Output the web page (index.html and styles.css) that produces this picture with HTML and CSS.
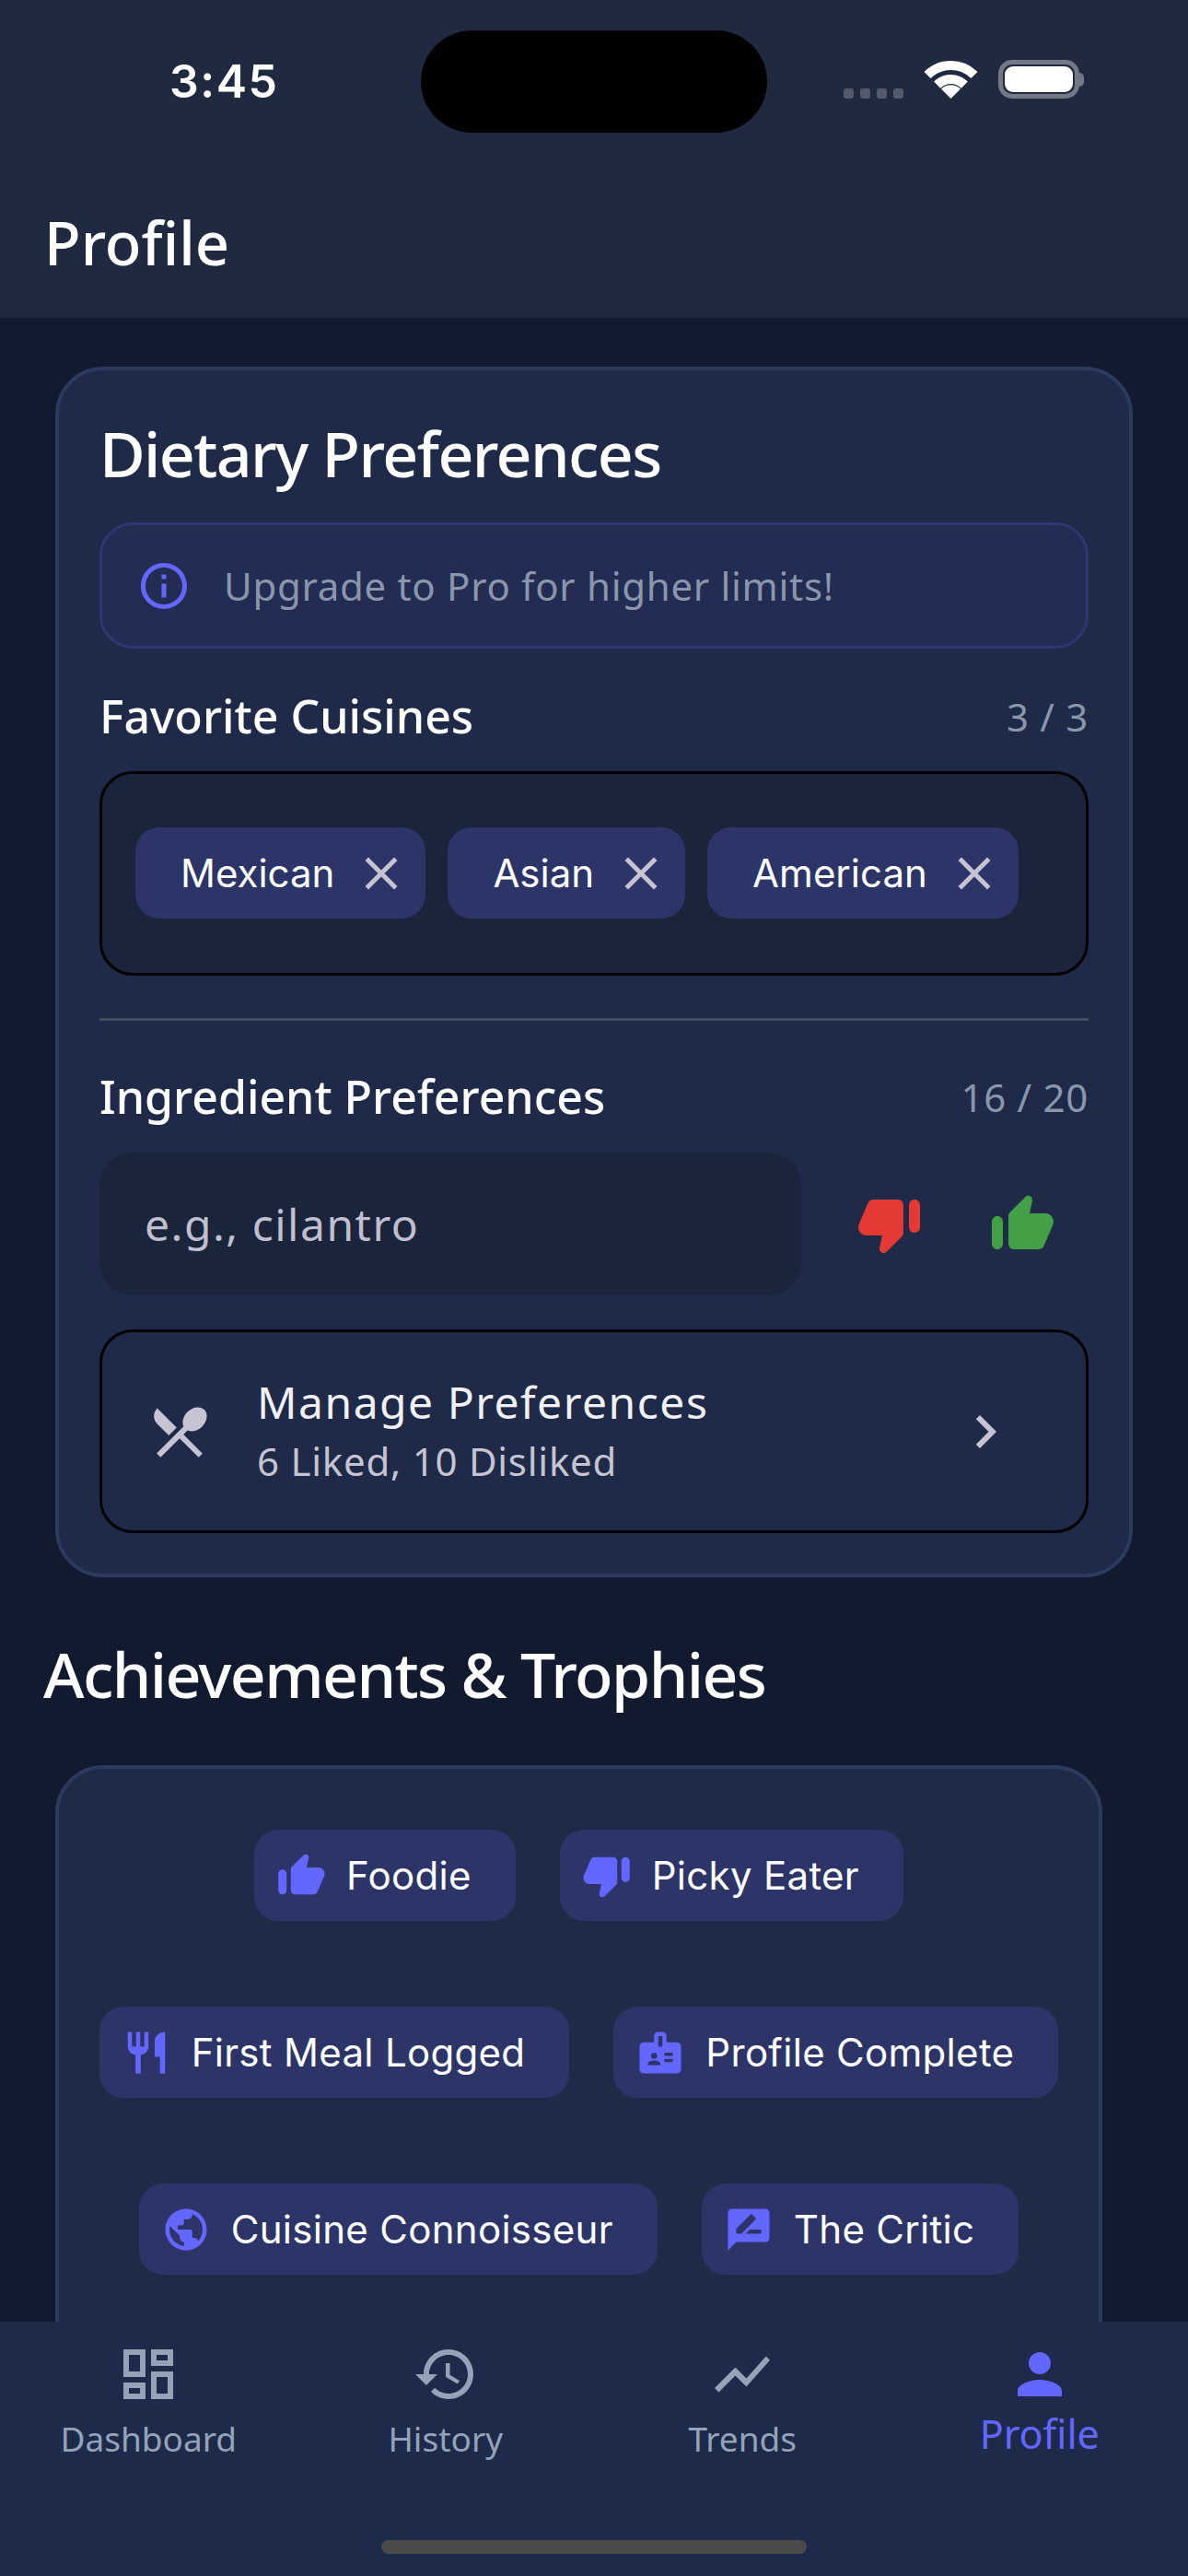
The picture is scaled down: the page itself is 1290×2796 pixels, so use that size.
FILE: index.html
```html
<!DOCTYPE html>
<html lang="en">
<head>
<meta charset="utf-8">
<title>Profile</title>
<link rel="stylesheet" href="styles.css">
</head>
<body>
<div class="screen">
  <header class="top">
    <div class="island"></div>
    <div class="status">
      <span class="time">3:45</span>
      <div class="status-right">
        <div class="signal"><i></i><i></i><i></i><i></i></div>
        <svg class="wifi" viewBox="0 0 57 42"><path d="M3 16.5A36 36 0 0 1 54 16.5M13.65 27.15A21 21 0 0 1 43.35 27.15" fill="none" stroke="#fff" stroke-width="10"/><path d="M28.5 42L18 31.5A15 15 0 0 1 39 31.5Z" fill="#fff"/></svg>
        <div class="battery"><div class="battery-fill"></div></div>
        <div class="battery-nub"></div>
      </div>
    </div>
    <h1 class="page-title">Profile</h1>
  </header>

  <main class="content">
    <section class="card card-diet">
      <h2 class="card-title">Dietary Preferences</h2>
      <div class="notice">
        <svg class="i60 accent" viewBox="0 0 24 24"><path d="M11 7h2v2h-2zm0 4h2v6h-2zm1-9C6.48 2 2 6.48 2 12s4.48 10 10 10 10-4.48 10-10S17.52 2 12 2zm0 18c-4.41 0-8-3.59-8-8s3.59-8 8-8 8 3.59 8 8-3.59 8-8 8z"/></svg>
        <span class="notice-text">Upgrade to Pro for higher limits!</span>
      </div>
      <div class="row-head fav-head">
        <span class="label">Favorite Cuisines</span>
        <span class="count">3 / 3</span>
      </div>
      <div class="cuisine-box">
        <div class="tag"><span>Mexican</span><svg class="i60 muted" viewBox="0 0 24 24"><path d="M19 6.41 17.59 5 12 10.59 6.41 5 5 6.41 10.59 12 5 17.59 6.41 19 12 13.41 17.59 19 19 17.59 13.41 12z"/></svg></div>
        <div class="tag"><span>Asian</span><svg class="i60 muted" viewBox="0 0 24 24"><path d="M19 6.41 17.59 5 12 10.59 6.41 5 5 6.41 10.59 12 5 17.59 6.41 19 12 13.41 17.59 19 19 17.59 13.41 12z"/></svg></div>
        <div class="tag"><span>American</span><svg class="i60 muted" viewBox="0 0 24 24"><path d="M19 6.41 17.59 5 12 10.59 6.41 5 5 6.41 10.59 12 5 17.59 6.41 19 12 13.41 17.59 19 19 17.59 13.41 12z"/></svg></div>
      </div>
      <div class="divider"></div>
      <div class="row-head ing-head">
        <span class="label">Ingredient Preferences</span>
        <span class="count">16 / 20</span>
      </div>
      <div class="input-row">
        <div class="input">e.g., cilantro</div>
        <svg class="i72 red" viewBox="0 0 24 24"><path d="M10.88 21.94l5.53-5.54c.37-.37.58-.88.58-1.41V5c0-1.1-.9-2-2-2H6c-.8 0-1.52.48-1.83 1.21L.91 11.82C.06 13.8 1.51 16 3.66 16h5.65l-.95 4.58c-.1.5.05 1.01.41 1.37.59.58 1.53.58 2.11-.01zM21 3c-1.1 0-2 .9-2 2v8c0 1.1.9 2 2 2s2-.9 2-2V5c0-1.1-.9-2-2-2z"/></svg>
        <svg class="i72 green" viewBox="0 0 24 24"><path d="M13.12 2.06 7.58 7.6c-.37.37-.58.88-.58 1.41V19c0 1.1.9 2 2 2h9c.8 0 1.52-.48 1.84-1.21l3.26-7.61C23.94 10.2 22.49 8 20.34 8h-5.65l.95-4.58c.1-.5-.05-1.01-.41-1.37-.59-.58-1.53-.58-2.11.01zM3 21c1.1 0 2-.9 2-2v-8c0-1.1-.9-2-2-2s-2 .9-2 2v8c0 1.1.9 2 2 2z"/></svg>
      </div>
      <div class="manage">
        <svg class="i72 muted" viewBox="0 0 24 24"><path d="M8.1 13.34l2.83-2.83L3.91 3.5c-1.56 1.56-1.56 4.09 0 5.66l4.19 4.18zm6.78-1.81c1.53.71 3.68.21 5.27-1.38 1.91-1.91 2.28-4.65.81-6.12-1.46-1.46-4.2-1.1-6.12.81-1.59 1.59-2.09 3.74-1.38 5.27L3.7 19.87l1.41 1.41L12 14.41l6.88 6.88 1.41-1.41L13.41 13l1.47-1.47z"/></svg>
        <div class="manage-text">
          <div class="manage-title">Manage Preferences</div>
          <div class="manage-sub">6 Liked, 10 Disliked</div>
        </div>
        <svg class="i72 muted chevron" viewBox="0 0 24 24"><path d="M10 6 8.59 7.41 13.17 12l-4.58 4.59L10 18l6-6z"/></svg>
      </div>
    </section>

    <h2 class="section-title">Achievements &amp; Trophies</h2>

    <section class="card card-trophies">
      <div class="badge"><svg class="i54 accent" viewBox="0 0 24 24"><path d="M13.12 2.06 7.58 7.6c-.37.37-.58.88-.58 1.41V19c0 1.1.9 2 2 2h9c.8 0 1.52-.48 1.84-1.21l3.26-7.61C23.94 10.2 22.49 8 20.34 8h-5.65l.95-4.58c.1-.5-.05-1.01-.41-1.37-.59-.58-1.53-.58-2.11.01zM3 21c1.1 0 2-.9 2-2v-8c0-1.1-.9-2-2-2s-2 .9-2 2v8c0 1.1.9 2 2 2z"/></svg><span>Foodie</span></div>
      <div class="badge"><svg class="i54 accent" viewBox="0 0 24 24"><path d="M10.88 21.94l5.53-5.54c.37-.37.58-.88.58-1.41V5c0-1.1-.9-2-2-2H6c-.8 0-1.52.48-1.83 1.21L.91 11.82C.06 13.8 1.51 16 3.66 16h5.65l-.95 4.58c-.1.5.05 1.01.41 1.37.59.58 1.53.58 2.11-.01zM21 3c-1.1 0-2 .9-2 2v8c0 1.1.9 2 2 2s2-.9 2-2V5c0-1.1-.9-2-2-2z"/></svg><span>Picky Eater</span></div>
      <div class="badge"><svg class="i54 accent" viewBox="0 0 24 24"><path d="M11 9H9V2H7v7H5V2H3v7c0 2.12 1.66 3.84 3.75 3.97V22h2.5v-9.03C11.34 12.84 13 11.12 13 9V2h-2v7zm5-3v8h2.5v8H21V2c-2.76 0-5 2.24-5 4z"/></svg><span>First Meal Logged</span></div>
      <div class="badge"><svg class="i54 accent" viewBox="0 0 24 24"><path d="M20 7h-5V4c0-1.1-.9-2-2-2h-2c-1.1 0-2 .9-2 2v3H4c-1.1 0-2 .9-2 2v11c0 1.1.9 2 2 2h16c1.1 0 2-.9 2-2V9c0-1.1-.9-2-2-2zM9 12c.83 0 1.5.67 1.5 1.5S9.83 15 9 15s-1.5-.67-1.5-1.5S8.17 12 9 12zm3 6H6v-.75c0-1 2-1.5 3-1.5s3 .5 3 1.5V18zm1-9h-2V4h2v5zm5 7.5h-4V15h4v1.5zm0-3h-4V12h4v1.5z"/></svg><span>Profile Complete</span></div>
      <div class="badge"><svg class="i54 accent" viewBox="0 0 24 24"><path d="M12 2C6.48 2 2 6.48 2 12s4.48 10 10 10 10-4.48 10-10S17.52 2 12 2zM4 12c0-.61.08-1.21.21-1.78L8.99 15v1c0 1.1.9 2 2 2v1.93C7.06 19.43 4 16.07 4 12zm13.89 5.4c-.26-.81-1-1.4-1.9-1.4h-1v-3c0-.55-.45-1-1-1h-6v-2h2c.55 0 1-.45 1-1V7h2c1.1 0 2-.9 2-2v-.41C17.92 5.77 20 8.65 20 12c0 2.08-.81 3.98-2.11 5.4z"/></svg><span>Cuisine Connoisseur</span></div>
      <div class="badge"><svg class="i54 accent" viewBox="0 0 24 24"><path d="M20 2H4c-1.1 0-2 .9-2 2v18l4-4h14c1.1 0 2-.9 2-2V4c0-1.1-.9-2-2-2zM6 14v-2.47l6.88-6.88c.2-.2.51-.2.71 0l1.77 1.77c.2.2.2.51 0 .71L8.47 14H6zm12 0h-7.5l2-2H18v2z"/></svg><span>The Critic</span></div>
    </section>
  </main>

  <nav class="tabs">
    <div class="tab">
      <svg class="i72 slate" viewBox="0 0 24 24"><path d="M19 5v2h-4V5h4M9 5v6H5V5h4m10 8v6h-4v-6h4M9 17v2H5v-2h4M21 3h-8v6h8V3zM11 3H3v10h8V3zm10 8h-8v10h8V11zm-10 4H3v6h8v-6z"/></svg>
      <span class="tab-label">Dashboard</span>
    </div>
    <div class="tab">
      <svg class="i72 slate" viewBox="0 0 24 24"><path d="M13 3c-4.97 0-9 4.03-9 9H1l3.89 3.89.07.14L9 12H6c0-3.87 3.13-7 7-7s7 3.13 7 7-3.13 7-7 7c-1.93 0-3.68-.79-4.94-2.06l-1.42 1.42C8.27 19.99 10.51 21 13 21c4.97 0 9-4.03 9-9s-4.03-9-9-9zm-1 5v5l4.28 2.54.72-1.21-3.5-2.08V8H12z"/></svg>
      <span class="tab-label">History</span>
    </div>
    <div class="tab">
      <svg class="i72 slate" viewBox="0 0 24 24"><path d="M3.5 18.49l6-6.01 4 4L22 6.92l-1.41-1.41-7.09 7.97-4-4L2 16.99z"/></svg>
      <span class="tab-label">Trends</span>
    </div>
    <div class="tab">
      <svg class="i72 accent" viewBox="0 0 24 24"><path d="M12 12c2.21 0 4-1.79 4-4s-1.79-4-4-4-4 1.79-4 4 1.79 4 4 4zm0 2c-2.67 0-8 1.34-8 4v2h16v-2c0-2.66-5.33-4-8-4z"/></svg>
      <span class="tab-label tab-active">Profile</span>
    </div>
    <div class="home-bar"></div>
  </nav>
</div>
</body>
</html>
```
FILE: styles.css
```css
* { box-sizing: border-box; margin: 0; padding: 0; }
html, body { width: 1290px; height: 2796px; overflow: hidden; background: #111a2e; }
body { font-family: "Noto Sans", sans-serif; color: #fff; }
svg { display: block; flex: none; fill: currentColor; }
.i54 { width: 54px; height: 54px; }
.i60 { width: 60px; height: 60px; }
.i72 { width: 72px; height: 72px; }
.accent { color: #6366ff; }
.muted { color: #c6c4d2; }
.slate { color: #94a3b8; }
.red { color: #e53935; }
.green { color: #43a047; }

.screen { width: 1290px; height: 2796px; display: flex; flex-direction: column; }

.top { position: relative; height: 345px; flex: none; background: #1f293f; padding-top: 58px; }
.island { position: absolute; left: 457px; top: 33px; width: 376px; height: 111px; border-radius: 56px; background: #000; }
.status { display: flex; justify-content: space-between; align-items: flex-start; height: 165px; padding-left: 184px; }
.time { font-family: Inter, sans-serif; font-weight: 600; font-size: 50px; line-height: 60px; letter-spacing: 1.5px; }
.status-right { display: flex; align-items: flex-start; padding-top: 7px; padding-right: 113px; }
.signal { display: flex; gap: 7px; margin-top: 31px; margin-right: 23px; }
.signal i { display: block; width: 11px; height: 11px; border-radius: 3px; background: #545b6e; }
.wifi { width: 57px; height: 42px; margin-right: 23px; }
.battery { width: 88px; height: 42px; border: 5px solid #737885; border-radius: 15px; padding: 2px; }
.battery-fill { width: 100%; height: 100%; background: #fff; border-radius: 9px; }
.battery-nub { width: 5px; height: 15px; margin: 14px 0 0 0; background: #737885; border-radius: 0 5px 5px 0; }
.page-title { font-size: 65px; font-weight: 500; line-height: 80px; padding-left: 48px; }

.content { flex: 1; min-height: 0; overflow: hidden; padding: 53px 0 0 60px; }
.card { border: 4px solid #2c3a5e; border-radius: 52px; }
.card-diet { width: 1170px; background: #1e2a48; padding: 40px 44px 44px; }
.card-title { font-size: 68px; font-weight: 500; line-height: 100px; margin-bottom: 25px; letter-spacing: -1.6px; }
.notice { height: 137px; display: flex; align-items: center; gap: 35px; padding-left: 37px; background: #232c52; border: 3px solid #2f3670; border-radius: 36px; }
.notice-text { font-size: 42px; color: #8a96ab; letter-spacing: 0.7px; }
.row-head { display: flex; justify-content: space-between; align-items: center; height: 60px; }
.fav-head { margin-top: 43px; }
.ing-head { margin-top: 52px; }
.label { font-size: 50px; font-weight: 500; }
.count { font-size: 42px; color: #8a96ab; letter-spacing: 0.7px; }

.cuisine-box { margin-top: 30px; height: 222px; display: flex; align-items: flex-start; gap: 24px; padding: 58px 36px; background: #1a243b; border: 3px solid #000; border-radius: 36px; }
.tag { height: 99px; display: flex; align-items: center; gap: 21px; padding: 0 18px 0 49px; background: #2d3568; border-radius: 26px; font-family: Inter, sans-serif; font-size: 42px; }

.divider { height: 3px; margin-top: 46px; background: #444c60; }

.input-row { margin-top: 31px; display: flex; align-items: center; }
.input { width: 762px; height: 155px; display: flex; align-items: center; padding-left: 49px; background: #1a243b; border-radius: 36px; font-size: 48px; color: #c0bfcf; letter-spacing: 1.5px; margin-right: 60px; }
.input-row .green { margin-left: 72px; }

.manage { margin-top: 37px; height: 221px; display: flex; align-items: center; padding-left: 48px; border: 3px solid #000; border-radius: 36px; }
.manage-text { flex: 1; margin-left: 48px; padding-bottom: 3px; }
.manage-title { font-size: 48px; line-height: 68px; color: #f1f1f5; letter-spacing: 1.5px; }
.manage-sub { font-size: 42px; line-height: 60px; color: #c6c4d2; letter-spacing: 0.75px; }
.chevron { margin-right: 73px; }

.section-title { font-size: 68px; font-weight: 500; line-height: 100px; margin: 55px 0 49px -13px; letter-spacing: -1.6px; }

.card-trophies { width: 1137px; height: 800px; background: #1f2a47; padding: 66px 30px 0; display: flex; flex-wrap: wrap; justify-content: center; align-content: flex-start; gap: 93px 48px; }
.badge { height: 99px; display: flex; align-items: center; gap: 22px; padding: 0 48px 0 24px; background: #2d3568; border-radius: 26px; font-family: Inter, sans-serif; font-size: 42px; letter-spacing: 0.3px; }

.tabs { position: relative; flex: none; height: 276px; background: #1e2a4a; display: grid; grid-template-columns: repeat(4, 1fr); align-items: start; padding-top: 21px; }
.tab { display: flex; flex-direction: column; align-items: center; }
.tab-label { font-size: 37px; line-height: 52px; color: #94a3b8; margin-top: 8px; }
.tab-active { font-size: 43px; color: #6366ff; margin-top: 3px; }
.home-bar { position: absolute; left: 414px; top: 237px; width: 462px; height: 15px; border-radius: 8px; background: #4a4a4a; }
```
